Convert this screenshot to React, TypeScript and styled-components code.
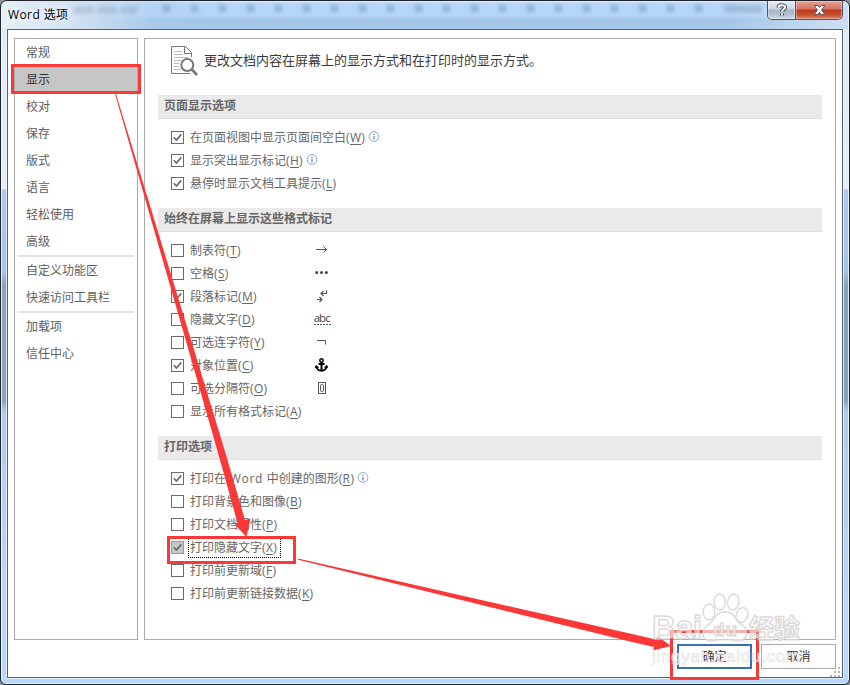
import React from "react";
import styled, { createGlobalStyle, css } from "styled-components";

const Global = createGlobalStyle`
  * { box-sizing: border-box; }
  body {
    margin: 0;
    overflow: hidden;
    background: #8d8f96;
    font-family: "Open Sans", "Noto Sans CJK SC", sans-serif;
    font-size: 12px;
    color: #666;
  }
`;

const Frame = styled.div`
  position: relative;
  width: 850px;
  height: 685px;
  padding: 0 6px 6px;
  border: 1px solid #20222c;
  border-radius: 7px 7px 6px 6px;
  display: flex;
  flex-direction: column;
  background: linear-gradient(#dfeaf6 0, #e4edf8 188px, #a9c9ee 189px, #a4c5eb 270px, #8ba2be 284px, #8ba2be 400px, #aecbeb 410px, #b8d8fb 600px);
  box-shadow: inset 0 0 0 1px rgba(240, 248, 255, 0.85);
`;

const TitleBar = styled.div`
  position: relative;
  flex: none;
  height: 28px;
  margin: 0 -5px;
  padding-left: 6px;
  display: flex;
  align-items: flex-start;
  justify-content: space-between;
  background: linear-gradient(90deg, #e6eff9 0, #d3e2f3 70px, rgba(176, 207, 240, 0.4) 150px, transparent 230px, transparent 720px, rgba(206, 223, 243, 0.9) 830px),
    linear-gradient(#e9f3fe 0, #b6d7fa 2px, #b6d7fa 14px, #a3c4e5 19px, #a7c8e9 27px);
  border-radius: 6px 6px 0 0;
  overflow: hidden;
`;

const Title = styled.span`
  position: relative;
  font-size: 12px;
  line-height: 16px;
  padding-top: 6px;
  letter-spacing: 0.4px;
  color: #000;
  text-shadow: 0 0 6px #fff, 0 0 8px #fff;
`;

const Ghosts = styled.svg`
  position: absolute;
  left: 0;
  top: 0;
  filter: blur(2px);
`;

const Captions = styled.div`
  position: relative;
  display: flex;
  width: 76px;
  height: 19px;
  margin-right: 5px;
  border: 1px solid #4d5664;
  border-top: 0;
  border-radius: 0 0 5px 5px;
  overflow: hidden;
`;

const Caption = styled.div<{ $close?: boolean }>`
  width: ${(p) => (p.$close ? 47 : 27)}px;
  display: flex;
  align-items: center;
  justify-content: center;
  box-shadow: inset 0 0 0 1px rgba(255, 255, 255, 0.35);
  background: ${(p) =>
    p.$close
      ? "linear-gradient(#e7a291 0, #d77363 8px, #b93622 9px, #c8502f 14px, #dd8467 18px)"
      : "linear-gradient(#e7edf5 0, #cbd5e1 8px, #a5b4c5 9px, #b4c2d3 14px, #d0dbe7 18px)"};
  border-left: ${(p) => (p.$close ? "1px solid #4d5664" : "0")};
`;

const Client = styled.div`
  flex: 1;
  min-height: 0;
  width: 836px;
  border: 1px solid #53606e;
  outline: 1px solid rgba(238, 247, 255, 0.8);
  background: #fff;
  padding: 8px 6px 0;
  display: flex;
  flex-direction: column;
`;

const Panels = styled.div`
  display: flex;
  gap: 6px;
  height: 602px;
`;

const Sidebar = styled.nav`
  width: 124px;
  border: 1px solid #ababab;
  display: flex;
  flex-direction: column;
`;

const NavItem = styled.div<{ $active?: boolean }>`
  height: 27px;
  padding-left: 11px;
  line-height: 28px;
  color: ${(p) => (p.$active ? "#333" : "#606060")};
  background: ${(p) => (p.$active ? "#c6c6c6" : "transparent")};
`;

const Divider = styled.div`
  height: 2px;
  margin: 0 3px;
  background: #e1e2e6;
`;

const Main = styled.main`
  width: 692px;
  border: 1px solid #ababab;
  padding: 0 13px;
`;

const Intro = styled.div`
  height: 56px;
  padding: 6px 0 0 12px;
  display: flex;
  align-items: flex-start;
  gap: 5px;
  font-size: 13px;
  line-height: 30px;
  color: #3a3a3a;
`;

const Section = styled.section<{ $after: number }>`
  padding-bottom: ${(p) => p.$after}px;
`;

const SectionHead = styled.h2`
  margin: 0 0 7px;
  height: 24px;
  padding-left: 6px;
  font-size: 12px;
  line-height: 21px;
  font-weight: 700;
  color: #666;
  background: #eaeaea;
  border-bottom: 1px solid #e0e0e0;
`;

const Row = styled.div`
  display: grid;
  grid-template-columns: 19px 125px 20px;
  align-items: center;
  height: 23px;
  padding-left: 13px;
`;

const Box = styled.span<{ $focus?: boolean }>`
  width: 13px;
  height: 13px;
  border: 1px solid ${(p) => (p.$focus ? "#999" : "#6a6a6a")};
  background: ${(p) => (p.$focus ? "#c6c6c6" : "#fff")};
  display: flex;
`;

const Label = styled.span<{ $focus?: boolean }>`
  display: flex;
  align-items: center;
  justify-self: start;
  white-space: pre;
  line-height: 16px;
  ${(p) =>
    p.$focus &&
    css`
      padding-right: 2px;
      outline: 1px dotted #000;
      outline-offset: 1px;
    `}
  u {
    text-underline-offset: 2px;
    text-decoration-thickness: 1px;
  }
`;

const Key = styled.span`
  letter-spacing: 0.35px;
`;

const Latin = styled.span`
  letter-spacing: 0.65px;
`;

const Info = styled.svg`
  margin-left: 3px;
  flex: none;
`;

const Mark = styled.svg`
  display: block;
`;

const Footer = styled.footer`
  display: flex;
  justify-content: flex-end;
  gap: 9px;
  padding: 4px 0 0;
`;

const Button = styled.button<{ $primary?: boolean }>`
  width: 75px;
  height: 25px;
  padding: 0 0 1px;
  font: inherit;
  color: #333;
  background: #fdfdfd;
  border: ${(p) => (p.$primary ? "2px solid #3e6db5" : "1px solid #ababab")};
`;

const Overlay = styled.svg`
  position: absolute;
  left: -1px;
  top: -1px;
  pointer-events: none;
`;

type MarkName = "tab" | "space" | "para" | "hidden" | "hyphen" | "anchor" | "break";
type Option = { text: React.ReactNode; k: string; on?: boolean; info?: boolean; focus?: boolean; mark?: MarkName };

const pageOptions: Option[] = [
  { text: "在页面视图中显示页面间空白", k: "W", on: true, info: true },
  { text: "显示突出显示标记", k: "H", on: true, info: true },
  { text: "悬停时显示文档工具提示", k: "L", on: true },
];
const markOptions: Option[] = [
  { text: "制表符", k: "T", mark: "tab" },
  { text: "空格", k: "S", mark: "space" },
  { text: "段落标记", k: "M", on: true, mark: "para" },
  { text: "隐藏文字", k: "D", mark: "hidden" },
  { text: "可选连字符", k: "Y", mark: "hyphen" },
  { text: "对象位置", k: "C", on: true, mark: "anchor" },
  { text: "可选分隔符", k: "O", mark: "break" },
  { text: "显示所有格式标记", k: "A" },
];
const printOptions: Option[] = [
  { text: <>打印在<Latin> Word </Latin>中创建的图形</>, k: "R", on: true, info: true },
  { text: "打印背景色和图像", k: "B" },
  { text: "打印文档属性", k: "P" },
  { text: "打印隐藏文字", k: "X", on: true, focus: true },
  { text: "打印前更新域", k: "F" },
  { text: "打印前更新链接数据", k: "K" },
];

const marks: Record<MarkName, React.ReactNode> = {
  tab: <path d="M1 7.5H12M8.5 4.5L11.5 7.5L8.5 10.5" />,
  space: (
    <g fill="#444" stroke="none">
      <circle cx="1.7" cy="7.5" r="1.5" />
      <circle cx="6.5" cy="7.5" r="1.5" />
      <circle cx="11.3" cy="7.5" r="1.5" />
    </g>
  ),
  para: <path strokeWidth="1.2" d="M11.5 2.5V5.5H6M8.5 3L6 5.5L8.5 8M2 11.5H7M4.5 9L7 11.5L4.5 14" />,
  hidden: (
    <>
      <text x="-1.3" y="11" fontSize="11.5" textLength="17" fill="#444" stroke="none">abc</text>
      <path d="M-1 13.5H16" strokeDasharray="2 1" />
    </>
  ),
  hyphen: <path d="M2 6.5H10.5V10.5" />,
  anchor: (
    <g stroke="#000" strokeWidth="2">
      <circle cx="6.5" cy="3.5" r="1.7" strokeWidth="1.5" />
      <path d="M6.5 5V14M3.5 7H9.5" />
      <path d="M1.3 9C1.5 15.3 11.5 15.3 11.7 9" />
      <path d="M0 10.7L1.2 8L3.8 10.5ZM13 10.7L11.8 8L9.2 10.5Z" fill="#000" strokeWidth=".3" />
    </g>
  ),
  break: (
    <>
      <path d="M3.5 2.5H10.5V13.5H3.5Z" />
      <rect x="5.5" y="4.5" width="3" height="7" rx="1.2" />
    </>
  ),
};

function OptionRow({ o }: { o: Option }) {
  return (
    <Row>
      <Box $focus={o.focus}>
        {o.on && (
          <svg width="11" height="11" viewBox="0 0 11 11">
            <path d="M1.8 5.2L4.4 8L9.3 2.4" fill="none" stroke="#666" strokeWidth="1.6" />
          </svg>
        )}
      </Box>
      <Label $focus={o.focus}>
        <span>
          {o.text}
          <Key>
            (<u>{o.k}</u>)
          </Key>
        </span>
        {o.info && (
          <Info width="12" height="13" viewBox="0 0 12 13">
            <circle cx="6" cy="5.5" r="4.9" fill="#fff" stroke="#86a6d8" />
            <path d="M6 2.8V3.9M6 4.9V8.4" stroke="#4f7fc4" strokeWidth="1.2" />
          </Info>
        )}
      </Label>
      {o.mark && (
        <Mark width="17" height="17" fill="none" stroke="#555" overflow="visible">
          {marks[o.mark]}
        </Mark>
      )}
    </Row>
  );
}

function Group({ title, options, after }: { title: string; options: Option[]; after: number }) {
  return (
    <Section $after={after}>
      <SectionHead>{title}</SectionHead>
      {options.map((o) => (
        <OptionRow key={o.k} o={o} />
      ))}
    </Section>
  );
}

const navFirst = ["常规", "显示", "校对", "保存", "版式", "语言", "轻松使用", "高级"];
const ghostXs = Array.from({ length: 20 }, (_, i) => 165 + i * 28);

export default function App() {
  return (
    <>
      <Global />
      <Frame>
        <TitleBar>
          <Ghosts width="848" height="28">
            <path d="M72 9H135" stroke="#7f93aa" strokeWidth="7" opacity=".35" strokeDasharray="20 3" />
            {ghostXs.map((x) => (
              <rect key={x} x={x - 4} y="4" width="7" height="7" fill="#6688ad" opacity=".5" />
            ))}
            <path d="M722 8H760" stroke="#687f99" strokeWidth="7" opacity=".35" />
          </Ghosts>
          <Title>Word 选项</Title>
          <Captions>
            <Caption>
              <svg width="12" height="14" viewBox="0 0 12 14" fill="none">
                <path d="M2.5 4.5C2.5 1.5 9 1.5 9 4.3C9 6.5 6 6 6 9M6 10.5V12.5" stroke="#424b58" strokeWidth="4" />
                <path d="M2.5 4.5C2.5 1.5 9 1.5 9 4.3C9 6.5 6 6 6 9M6 10.5V12.5" stroke="#fff" strokeWidth="2" />
              </svg>
            </Caption>
            <Caption $close>
              <svg width="13" height="12" viewBox="0 0 13 12">
                <path
                  d="M1.2 1.5H4.7L6.5 3.5L8.3 1.5H11.8L8.6 6L11.8 10.5H8.3L6.5 8.4L4.7 10.5H1.2L4.4 6Z"
                  fill="#fff"
                  stroke="#55505e"
                />
              </svg>
            </Caption>
          </Captions>
        </TitleBar>
        <Client>
          <Panels>
            <Sidebar>
              {navFirst.map((n) => (
                <NavItem key={n} $active={n === "显示"}>
                  {n}
                </NavItem>
              ))}
              <Divider />
              <NavItem>自定义功能区</NavItem>
              <NavItem>快速访问工具栏</NavItem>
              <Divider />
              <NavItem>加载项</NavItem>
              <NavItem>信任中心</NavItem>
            </Sidebar>
            <Main>
              <Intro>
                <svg width="29" height="32" viewBox="0 0 29 32" fill="none" stroke="#777">
                  <path d="M20.5 28.5H1.5V1.5H15.5L21.5 7.5V12M14.5 1.5V8.5H21.5" />
                  <path d="M4 6.5H12M4 9.5H13M4 12.5H18M4 15.5H11M4 18.5H9M4 21.5H9M4 24.5H11" stroke="#bdbdbd" />
                  <circle cx="17.3" cy="20" r="6" fill="#fff" stroke="#777" strokeWidth="2" />
                  <path d="M21.8 24.5L27 30" stroke="#777" strokeWidth="2.7" />
                </svg>
                更改文档内容在屏幕上的显示方式和在打印时的显示方式。
              </Intro>
              <Group title="页面显示选项" options={pageOptions} after={13} />
              <Group title="始终在屏幕上显示这些格式标记" options={markOptions} after={13} />
              <Group title="打印选项" options={printOptions} after={0} />
            </Main>
          </Panels>
          <Footer>
            <Button $primary>确定</Button>
            <Button>取消</Button>
          </Footer>
        </Client>
        <Overlay width="850" height="685" viewBox="0 0 850 685">
          <g fill="#b5b5b5">
            {[[838, 668], [834, 672], [838, 672], [830, 676], [834, 676], [838, 676]].map(([x, y]) => (
              <rect key={`${x}-${y}`} x={x} y={y - 1} width="2" height="2" />
            ))}
          </g>
          <g fill="none" stroke="#fb3838" strokeWidth="3">
            <rect x="12.5" y="65.5" width="127" height="27" />
            <rect x="168.5" y="537.5" width="126" height="25" />
            <rect x="671.5" y="631.5" width="86" height="47" />
          </g>
          <g fill="#fb3838">
            <path d="M115 94L116 94L218.5 430L227.5 460L245 520L250.5 518.5L246.5 537L235 524.5L237.5 523L220 460L211.5 430Z" />
            <path d="M298 558.5L630 633.5L656 639.5L657.5 636L671 646L653 650.5L654 647L630 641.5L298 559.8Z" />
          </g>
          <g
            fill="#fff"
            fillOpacity=".6"
            stroke="#cfcfcf"
            strokeOpacity=".75"
            strokeWidth="1.5"
            strokeLinejoin="round"
            fontFamily="'Liberation Sans', 'Noto Sans CJK SC', sans-serif"
            fontWeight="700"
          >
            <ellipse cx="709" cy="612" rx="5.8" ry="8" />
            <ellipse cx="719.7" cy="602" rx="5.7" ry="8" />
            <ellipse cx="733.3" cy="602" rx="5.7" ry="8" transform="rotate(12 733.3 602)" />
            <ellipse cx="742" cy="615" rx="5.8" ry="7.5" transform="rotate(20 742 615)" />
            <path d="M725 612C736 612 734 620 742 625C751 631 746 642 737 641C729 639 721 639 713 641C702 642 699 631 708 625C716 620 714 612 725 612Z" />
            <text x="652" y="639" fontSize="33" textLength="50">Bai</text>
            <text x="713" y="636" fontSize="19" textLength="24">du</text>
            <text x="749" y="638" fontSize="26" textLength="51">经验</text>
            <text x="652" y="662" fontSize="17" fontWeight="400" fillOpacity=".7" stroke="#dadada" strokeWidth=".7" textLength="148">
              jingyan.baidu.com
            </text>
          </g>
        </Overlay>
      </Frame>
    </>
  );
}
